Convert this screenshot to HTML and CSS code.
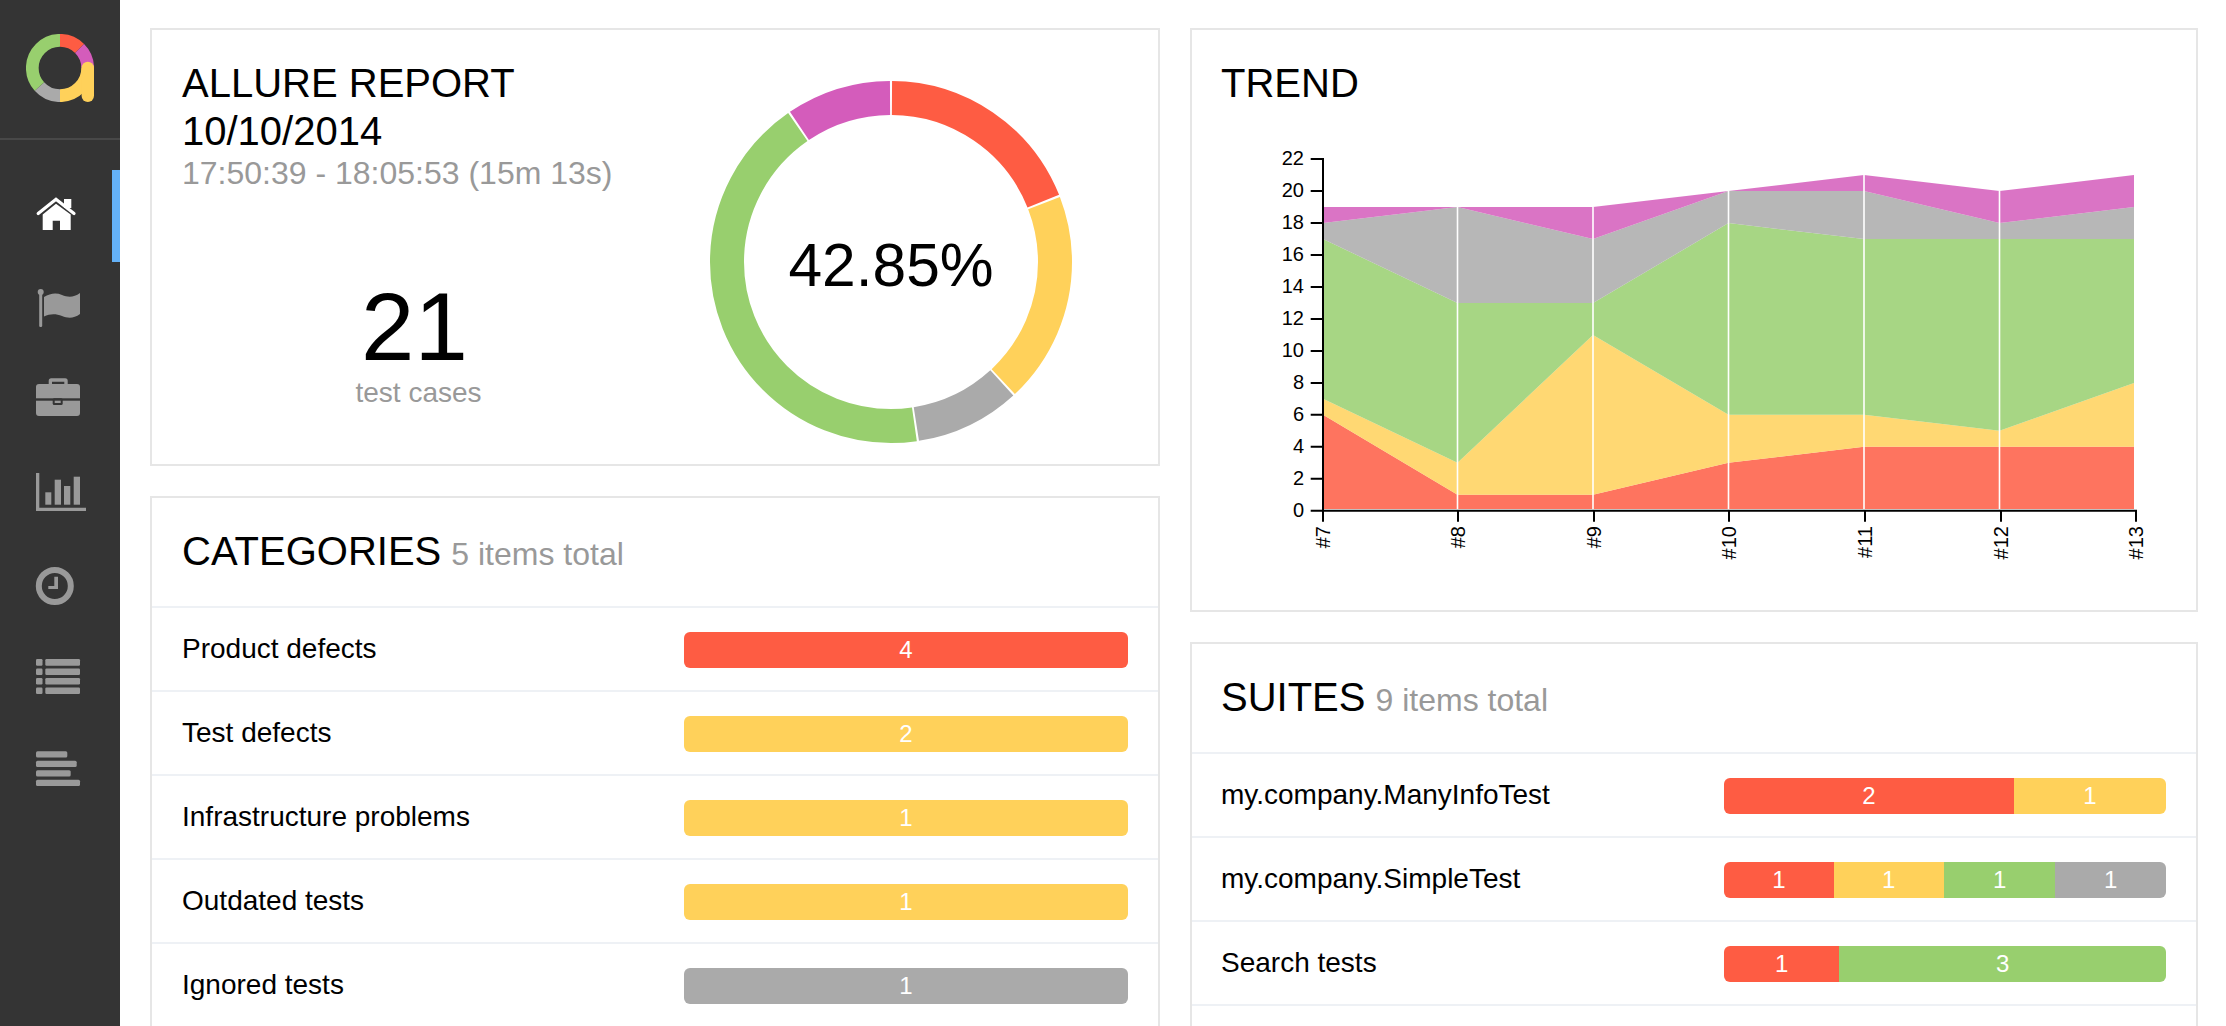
FILE: index.html
```html
<!DOCTYPE html>
<html lang="en">
<head>
<meta charset="utf-8">
<title>Allure Report</title>
<link rel="stylesheet" href="styles.css">
</head>
<body>
<div class="app">
  <aside class="side">
    <div class="logo">
      <svg class="logo-svg" viewBox="0 0 68 68" width="68" height="68">
        <g class="ring" transform="rotate(-90 34 34)">
          <circle class="s-failed" cx="34" cy="34" r="27.7" pathLength="360" stroke-dasharray="45 315"/>
          <circle class="s-unknown" cx="34" cy="34" r="27.7" pathLength="360" stroke-dasharray="45 315" stroke-dashoffset="-45"/>
          <circle class="s-broken" cx="34" cy="34" r="27.7" pathLength="360" stroke-dasharray="90 270" stroke-dashoffset="-90"/>
          <circle class="s-skipped" cx="34" cy="34" r="27.7" pathLength="360" stroke-dasharray="48 312" stroke-dashoffset="-180"/>
          <circle class="s-passed" cx="34" cy="34" r="27.7" pathLength="360" stroke-dasharray="132 228" stroke-dashoffset="-228"/>
        </g>
        <path class="tail" d="M61.8 34V61.8"/>
      </svg>
    </div>
    <nav class="menu">
      <a class="item active">
        <svg class="ico" viewBox="0 0 52 44" width="52" height="44">
          <path class="roof" d="M2.2 19.6 20 5.2 38 19.6"/>
          <rect x="28" y="5" width="7.3" height="9"/>
          <path d="M6.7 20.5 20 9.8 34.7 20.5V36H24V26.7H16.7V36H6.7Z"/>
        </svg>
      </a>
      <a class="item">
        <svg class="ico" viewBox="0 0 52 44" width="52" height="44">
          <circle cx="4.7" cy="6" r="3"/>
          <rect x="3.2" y="6" width="3" height="35" rx="1.2"/>
          <path d="M8 11C14 7.5 20 6.5 26 9 32 11.5 38 11.5 44 7V28C38 32.5 32 32.5 26 30 20 27.5 14 27.5 8 30.5Z"/>
        </svg>
      </a>
      <a class="item">
        <svg class="ico" viewBox="0 0 52 44" width="52" height="44">
          <path fill-rule="evenodd" d="M3 6H12.7V2.8A2.5 2.5 0 0 1 15.2 .3H29.2A2.5 2.5 0 0 1 31.7 2.8V6H41A3 3 0 0 1 44 9V35A3 3 0 0 1 41 38H3A3 3 0 0 1 0 35V9A3 3 0 0 1 3 6ZM16 3.7V6H28.3V3.7Z"/>
          <rect class="cut" x="0" y="20.3" width="44" height="2.4"/>
          <rect class="cut" x="16.7" y="20.3" width="10" height="6.7" rx="1.5"/>
          <rect x="18.7" y="22.7" width="6" height="2.3"/>
        </svg>
      </a>
      <a class="item">
        <svg class="ico" viewBox="0 0 52 44" width="52" height="44">
          <path d="M0 3H3.3V37.7H50V41H0Z"/>
          <rect x="9.3" y="22.3" width="6" height="12.4"/>
          <rect x="18.7" y="9.7" width="6.3" height="25"/>
          <rect x="28" y="16" width="6.3" height="18.7"/>
          <rect x="37.7" y="6.7" width="6.3" height="28"/>
        </svg>
      </a>
      <a class="item">
        <svg class="ico" viewBox="0 0 52 44" width="52" height="44">
          <circle class="clock" cx="18.8" cy="24" r="16"/>
          <path d="M18.3 14.7H22V27H12.3V24H18.3Z"/>
        </svg>
      </a>
      <a class="item">
        <svg class="ico" viewBox="0 0 52 44" width="52" height="44">
          <rect y="5" width="6.5" height="6.7" rx="1.2"/><rect x="9.3" y="5" width="34.7" height="6.7" rx="1.2"/>
          <rect y="14.5" width="6.5" height="6.5" rx="1.2"/><rect x="9.3" y="14.5" width="34.7" height="6.5" rx="1.2"/>
          <rect y="24" width="6.5" height="6.5" rx="1.2"/><rect x="9.3" y="24" width="34.7" height="6.5" rx="1.2"/>
          <rect y="33.5" width="6.5" height="6.5" rx="1.2"/><rect x="9.3" y="33.5" width="34.7" height="6.5" rx="1.2"/>
        </svg>
      </a>
      <a class="item">
        <svg class="ico" viewBox="0 0 52 44" width="52" height="44">
          <rect y="5.3" width="31.3" height="6.3" rx="1.5"/>
          <rect y="14.8" width="40.7" height="6.3" rx="1.5"/>
          <rect y="24.2" width="34.7" height="6.3" rx="1.5"/>
          <rect y="33.7" width="44" height="6.3" rx="1.5"/>
        </svg>
      </a>
    </nav>
  </aside>

  <main class="main">
    <div class="col col-left">
      <section class="card summary">
        <div class="summary-text">
          <h2 class="title">ALLURE REPORT<br>10/10/2014</h2>
          <div class="time">17:50:39 - 18:05:53 (15m 13s)</div>
          <div class="count">21</div>
          <div class="count-label">test cases</div>
        </div>
        <div class="summary-chart">
          <svg class="donut" viewBox="0 0 362 362" width="362" height="362">
            <g class="donut-ring" transform="rotate(-90 181 181)">
              <circle class="s-failed" cx="181" cy="181" r="164" pathLength="21" stroke-dasharray="3.96 17.04" stroke-dashoffset="-0.02"/>
              <circle class="s-broken" cx="181" cy="181" r="164" pathLength="21" stroke-dasharray="3.96 17.04" stroke-dashoffset="-4.02"/>
              <circle class="s-skipped" cx="181" cy="181" r="164" pathLength="21" stroke-dasharray="1.96 19.04" stroke-dashoffset="-8.02"/>
              <circle class="s-passed" cx="181" cy="181" r="164" pathLength="21" stroke-dasharray="8.96 12.04" stroke-dashoffset="-10.02"/>
              <circle class="s-unknown" cx="181" cy="181" r="164" pathLength="21" stroke-dasharray="1.96 19.04" stroke-dashoffset="-19.02"/>
            </g>
            <text class="donut-text" x="181" y="205">42.85%</text>
          </svg>
        </div>
      </section>

      <section class="card list-card">
        <header class="list-head"><h2 class="title">CATEGORIES</h2><span class="total">5 items total</span></header>
        <div class="row"><div class="name">Product defects</div><div class="bar"><span class="seg failed wide">4</span></div></div>
        <div class="row"><div class="name">Test defects</div><div class="bar"><span class="seg broken wide">2</span></div></div>
        <div class="row"><div class="name">Infrastructure problems</div><div class="bar"><span class="seg broken wide">1</span></div></div>
        <div class="row"><div class="name">Outdated tests</div><div class="bar"><span class="seg broken wide">1</span></div></div>
        <div class="row"><div class="name">Ignored tests</div><div class="bar"><span class="seg skipped wide">1</span></div></div>
      </section>
    </div>

    <div class="col col-right">
      <section class="card trend">
        <h2 class="title">TREND</h2>
        <svg class="chart" viewBox="0 0 947 449" width="947" height="449">
          <g class="areas">
            <polygon class="f-failed" points="102,284.8 236.5,364.7 372,364.7 507.5,332.8 643,316.8 778.5,316.8 913,316.8 913,379 102,379"/>
            <polygon class="f-broken" points="102,268.8 236.5,332.8 372,204.9 507.5,284.8 643,284.8 778.5,300.8 913,252.9 913,316.8 778.5,316.8 643,316.8 507.5,332.8 372,364.7 236.5,364.7 102,284.8"/>
            <polygon class="f-passed" points="102,109 236.5,173 372,173 507.5,93.1 643,109 778.5,109 913,109 913,252.9 778.5,300.8 643,284.8 507.5,284.8 372,204.9 236.5,332.8 102,268.8"/>
            <polygon class="f-skipped" points="102,93.1 236.5,77.1 372,109 507.5,61.1 643,61.1 778.5,93.1 913,77.1 913,109 778.5,109 643,109 507.5,93.1 372,173 236.5,173 102,109"/>
            <polygon class="f-unknown" points="102,77.1 236.5,77.1 372,77.1 507.5,61.1 643,45.1 778.5,61.1 913,45.1 913,77.1 778.5,93.1 643,61.1 507.5,61.1 372,109 236.5,77.1 102,93.1"/>
          </g>
          <path class="guides" d="M236.5 77V379M372 77V379M507.5 61V379M643 45V379M778.5 61V379"/>
          <path class="axis" d="M89.7 29.1H102V380.7H915V391.7M89.7 61.1H102M89.7 93.1H102M89.7 125H102M89.7 157H102M89.7 189H102M89.7 221H102M89.7 252.9H102M89.7 284.8H102M89.7 316.8H102M89.7 348.8H102M89.7 380.7H102M102 380.7V391.7M237 380.7V391.7M373 380.7V391.7M508 380.7V391.7M644 380.7V391.7M780 380.7V391.7"/>
          <g class="ylabels">
            <text x="83" y="35">22</text><text x="83" y="67">20</text><text x="83" y="99">18</text><text x="83" y="131">16</text>
            <text x="83" y="163">14</text><text x="83" y="195">12</text><text x="83" y="227">10</text><text x="83" y="259">8</text>
            <text x="83" y="291">6</text><text x="83" y="323">4</text><text x="83" y="355">2</text><text x="83" y="387">0</text>
          </g>
          <g class="xlabels">
            <text transform="translate(109 396) rotate(-90)">#7</text>
            <text transform="translate(244 396) rotate(-90)">#8</text>
            <text transform="translate(380 396) rotate(-90)">#9</text>
            <text transform="translate(515 396) rotate(-90)">#10</text>
            <text transform="translate(651 396) rotate(-90)">#11</text>
            <text transform="translate(787 396) rotate(-90)">#12</text>
            <text transform="translate(922 396) rotate(-90)">#13</text>
          </g>
        </svg>
      </section>

      <section class="card list-card list-tall">
        <header class="list-head"><h2 class="title">SUITES</h2><span class="total">9 items total</span></header>
        <div class="row"><div class="name">my.company.ManyInfoTest</div><div class="bar"><span class="seg failed" style="width:65.6%">2</span><span class="seg broken" style="width:34.4%">1</span></div></div>
        <div class="row"><div class="name">my.company.SimpleTest</div><div class="bar"><span class="seg failed" style="width:24.8%">1</span><span class="seg broken" style="width:24.9%">1</span><span class="seg passed" style="width:25.3%">1</span><span class="seg skipped" style="width:25%">1</span></div></div>
        <div class="row"><div class="name">Search tests</div><div class="bar"><span class="seg failed" style="width:26.1%">1</span><span class="seg passed" style="width:73.9%">3</span></div></div>
      </section>
    </div>
  </main>
</div>
</body>
</html>
```

FILE: styles.css
```css
* { box-sizing: border-box; }
html, body { margin: 0; height: 100%; overflow: hidden; background: #fff; }
body { font-family: "Liberation Sans", Arial, sans-serif; color: #000; }

.app { display: flex; height: 1026px; overflow: hidden; }

/* sidebar */
.side { flex: 0 0 120px; background: #343434; }
.logo { height: 140px; padding: 34px 0 0 26px; border-bottom: 2px solid #484848; }
.logo-svg { display: block; }
.ring circle { fill: none; stroke-width: 12.7; }
.s-failed { stroke: #fe5c43; }
.s-broken { stroke: #ffd15a; }
.s-passed { stroke: #98cf6e; }
.s-skipped { stroke: #aaaaaa; }
.s-unknown { stroke: #d45cbb; }
.tail { fill: none; stroke: #ffd15a; stroke-width: 12.4; stroke-linecap: round; }
.menu { padding-top: 30px; }
.item { display: flex; align-items: center; height: 92px; padding-left: 36px; color: #999; border-right: 8px solid transparent; }
.item.active { color: #fff; border-right-color: #64b1f7; }
.ico { display: block; flex: none; overflow: visible; fill: currentColor; }
.roof { fill: none; stroke: currentColor; stroke-width: 3.2; stroke-linecap: round; }
.cut { fill: #343434; }
.clock { fill: none; stroke: currentColor; stroke-width: 6; }

/* content */
.main { flex: 1; min-width: 0; display: grid; grid-template-columns: 1010px 1008px; gap: 30px; padding: 28px 0 0 30px; align-items: start; }
.col { display: flex; flex-direction: column; gap: 30px; min-width: 0; }
.col-left { --bar-width: 444px; --pad-left: 30px; }
.col-right { --bar-width: 442px; --pad-left: 29px; }
.card { border: 2px solid #e6e6e6; background: #fff; }
.title { margin: 0; font-size: 40px; line-height: 48px; font-weight: 400; }

/* summary */
.summary { display: grid; grid-template-columns: 1fr 1fr; height: 438px; padding: 29px 30px 0; }
.time { margin-top: 2px; font-size: 32px; line-height: 32px; color: #999; white-space: nowrap; }
.count { margin-top: 90px; padding-right: 8px; font-size: 96px; line-height: 96px; text-align: center; }
.count-label { margin-top: 2px; font-size: 28px; line-height: 32px; color: #999; text-align: center; }
.summary-chart { display: flex; justify-content: center; align-items: flex-start; padding: 22px 1px 0 0; }
.donut-ring circle { fill: none; stroke-width: 34; }
.donut-text { font-size: 60.5px; text-anchor: middle; fill: #000; }

/* trend */
.trend { height: 584px; padding: 29px 30px 0 var(--pad-left); }
.chart { display: block; margin-top: 23px; overflow: visible; }
.areas polygon { fill-opacity: .85; }
.f-failed { fill: #fe5c43; }
.f-broken { fill: #ffd15a; }
.f-passed { fill: #98cf6e; }
.f-skipped { fill: #aaaaaa; }
.f-unknown { fill: #d45cbb; }
.guides { fill: none; stroke: #fff; stroke-width: 1.6; }
.axis { fill: none; stroke: #000; stroke-width: 2; }
.ylabels text { font-size: 20px; text-anchor: end; fill: #000; }
.xlabels text { font-size: 20px; text-anchor: end; fill: #000; }

/* lists */
.list-tall { min-height: 600px; }
.list-head { display: flex; align-items: baseline; gap: 10px; padding: 29px 30px 31px var(--pad-left); border-bottom: 2px solid #eef1f5; }
.total { font-size: 32px; line-height: 36px; color: #999; }
.row { display: grid; grid-template-columns: 1fr var(--bar-width); align-items: center; height: 84px; padding: 2px 30px 0 var(--pad-left); border-bottom: 2px solid #eef1f5; }
.name { padding-bottom: 3px; font-size: 28px; line-height: 36px; }
.bar { display: flex; height: 36px; border-radius: 6px; overflow: hidden; }
.seg { display: block; color: #fff; font-size: 24px; line-height: 36px; text-align: center; }
.wide { width: 100%; }
.failed { background: #fe5c43; }
.broken { background: #ffd15a; }
.passed { background: #98cf6e; }
.skipped { background: #aaaaaa; }
```
